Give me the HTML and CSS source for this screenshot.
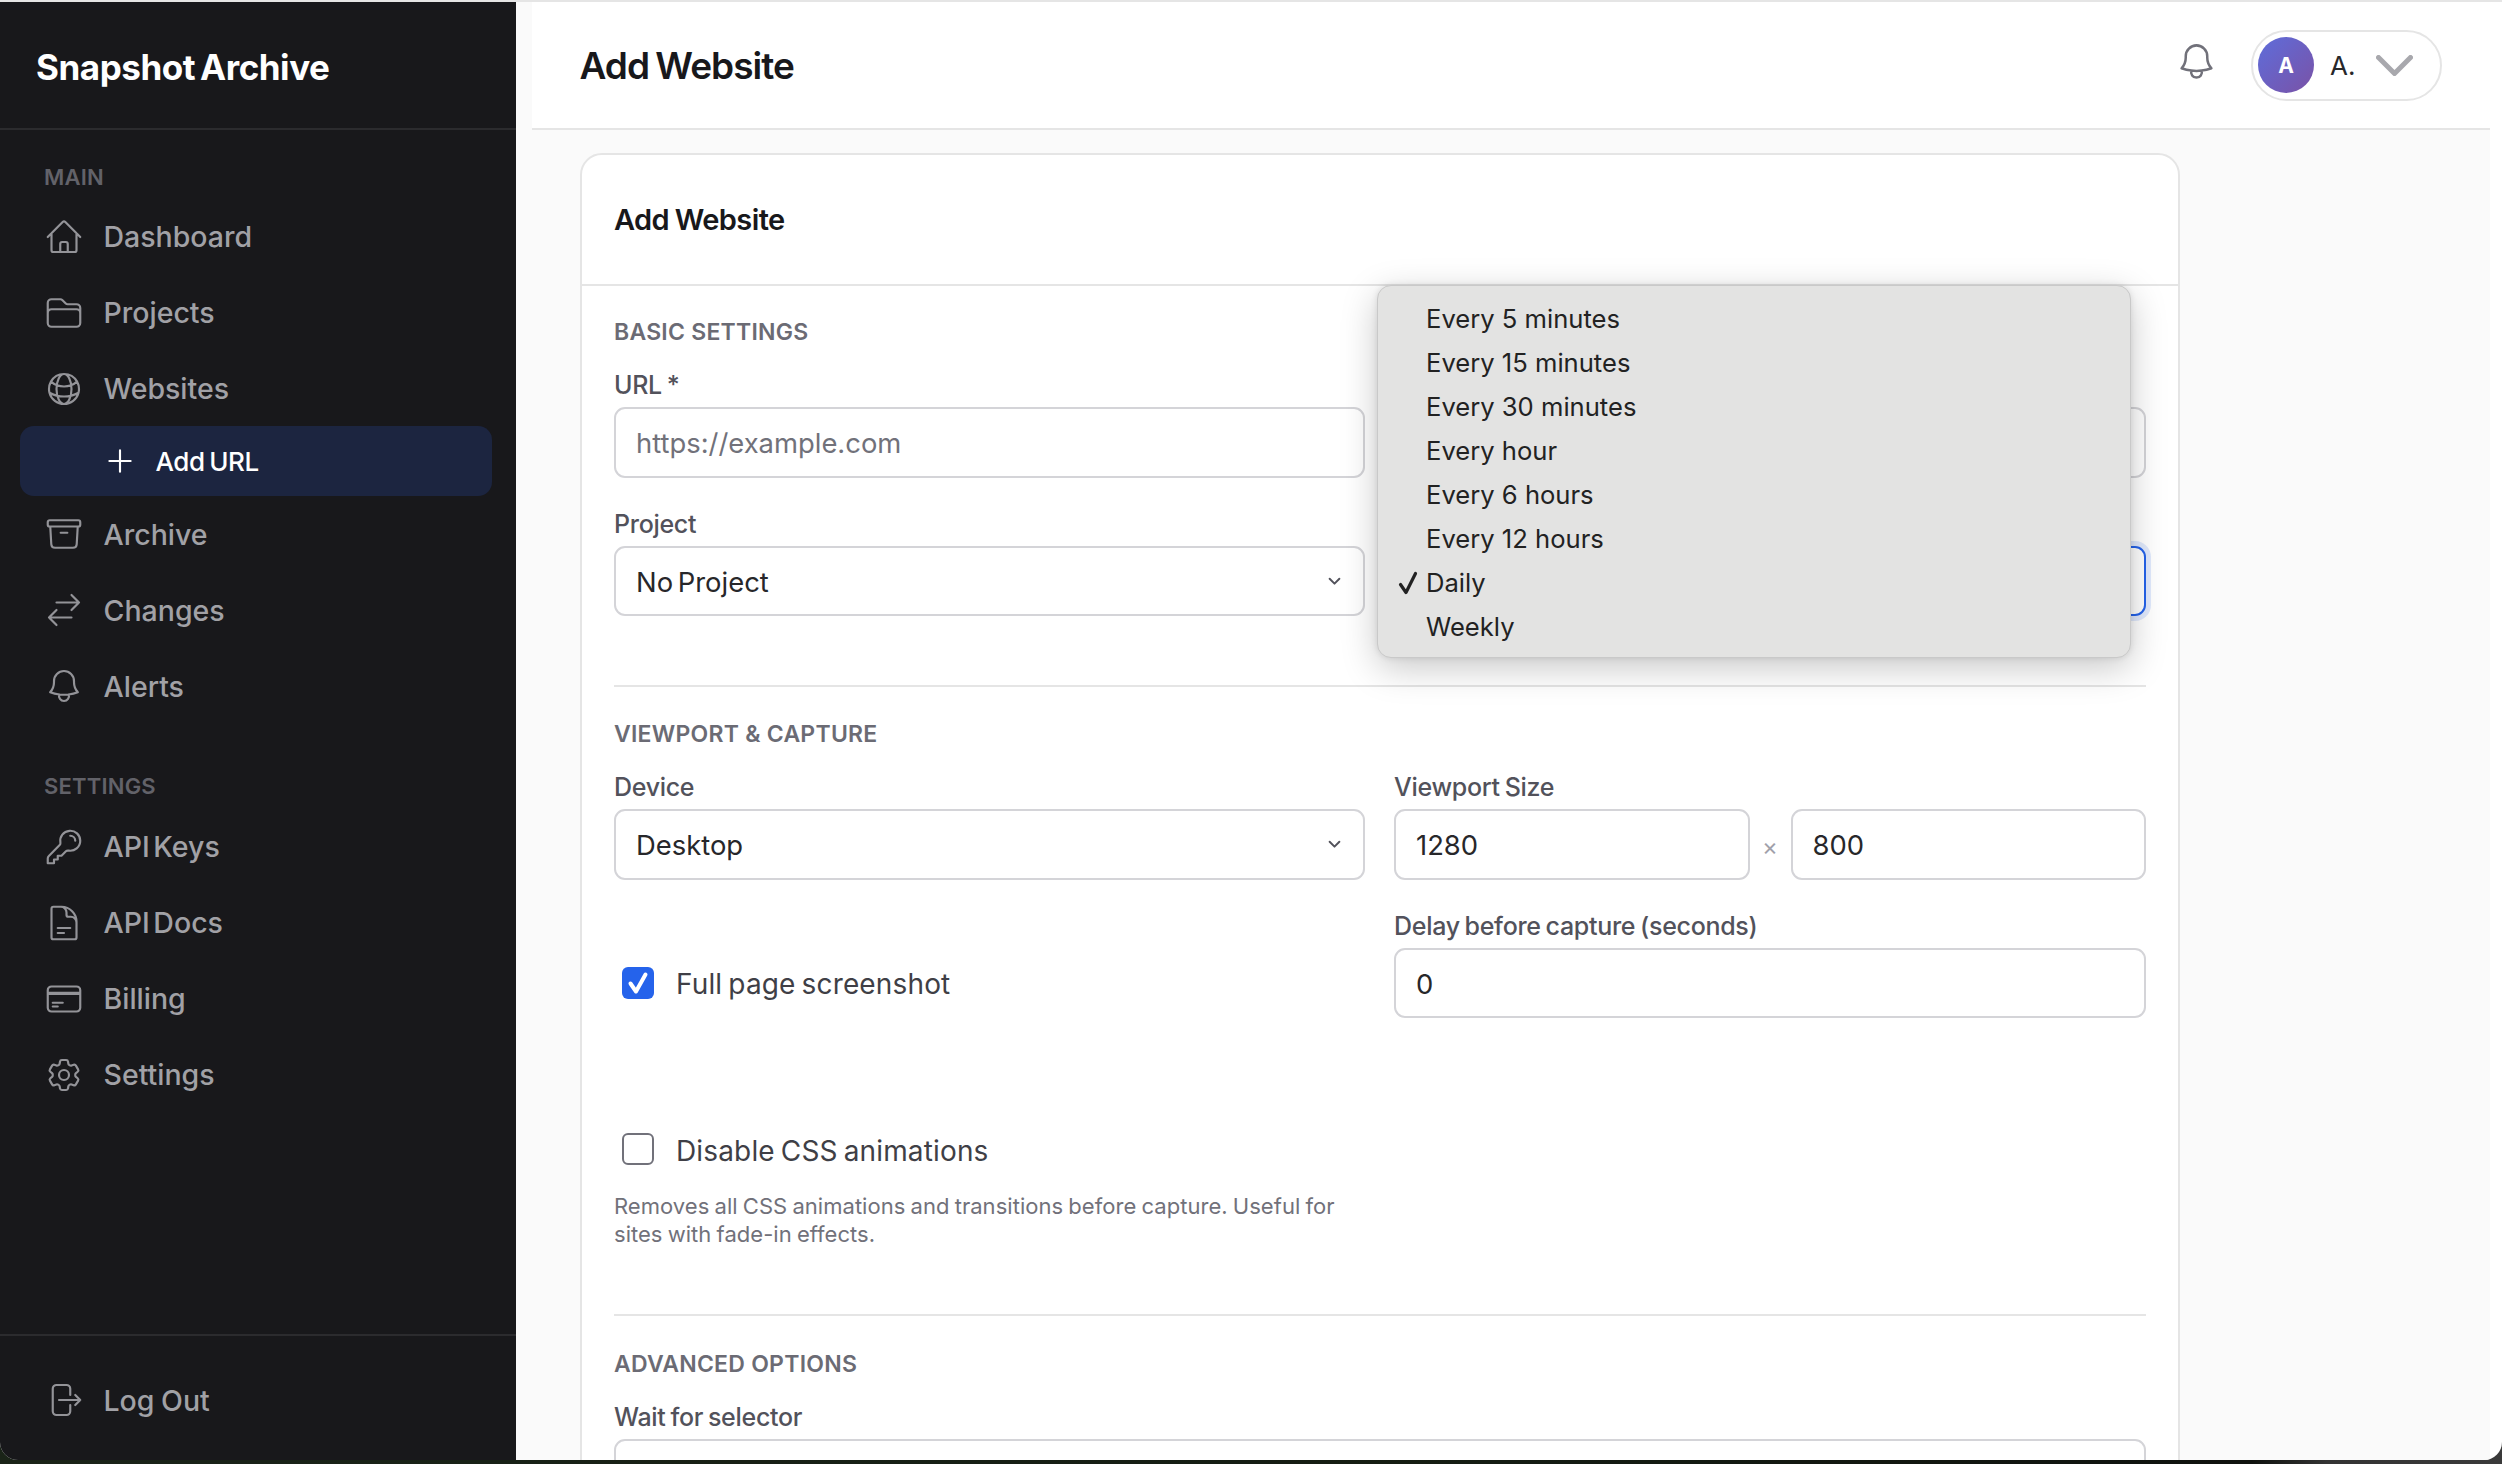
FILE: index.html
```html
<!DOCTYPE html>
<html lang="en">
<head>
<meta charset="utf-8">
<title>Add Website - Snapshot Archive</title>
<link rel="stylesheet" href="styles.css">
</head>
<body>
<div class="window">
  <aside class="sidebar">
    <div class="brand"><span class="brand-name">Snapshot Archive</span></div>
    <nav class="nav">
      <div class="nav-label first">MAIN</div>
      <a class="nav-item"><svg class="icon" viewBox="0 0 24 24"><path d="M2.25 12l8.954-8.955c.44-.439 1.152-.439 1.591 0L21.75 12M4.5 9.75v10.125c0 .621.504 1.125 1.125 1.125H9.75v-4.875c0-.621.504-1.125 1.125-1.125h2.25c.621 0 1.125.504 1.125 1.125V21h4.125c.621 0 1.125-.504 1.125-1.125V9.75M8.25 21h8.25"/></svg><span>Dashboard</span></a>
      <a class="nav-item"><svg class="icon" viewBox="0 0 24 24"><path d="M2.25 12.75V12A2.25 2.25 0 014.5 9.75h15A2.25 2.25 0 0121.75 12v.75m-8.69-6.44l-2.12-2.12a1.5 1.5 0 00-1.061-.44H4.5A2.25 2.25 0 002.25 6v12a2.25 2.25 0 002.25 2.25h15A2.25 2.25 0 0021.75 18V9a2.25 2.25 0 00-2.25-2.25h-5.379a1.5 1.5 0 01-1.06-.44z"/></svg><span>Projects</span></a>
      <a class="nav-item"><svg class="icon" viewBox="0 0 24 24"><path d="M12 21a9.004 9.004 0 008.716-6.747M12 21a9.004 9.004 0 01-8.716-6.747M12 21c2.485 0 4.5-4.03 4.5-9S14.485 3 12 3m0 18c-2.485 0-4.5-4.03-4.5-9S9.515 3 12 3m0 0a8.997 8.997 0 017.843 4.582M12 3a8.997 8.997 0 00-7.843 4.582m15.686 0A11.953 11.953 0 0112 10.5c-2.998 0-5.74-1.1-7.843-2.918m15.686 0A8.959 8.959 0 0121 12c0 .778-.099 1.533-.284 2.253m0 0A17.919 17.919 0 0112 16.5c-3.162 0-6.133-.815-8.716-2.247m0 0A9.015 9.015 0 013 12c0-1.605.42-3.113 1.157-4.418"/></svg><span>Websites</span></a>
      <a class="nav-sub"><svg class="icon-plus" viewBox="0 0 24 24"><path d="M12 4.5v15m7.5-7.5h-15"/></svg><span>Add URL</span></a>
      <a class="nav-item"><svg class="icon" viewBox="0 0 24 24"><path d="M20.25 7.5l-.625 10.632a2.25 2.25 0 01-2.247 2.118H6.622a2.25 2.25 0 01-2.247-2.118L3.75 7.5M10 11.25h4M3.375 7.5h17.25c.621 0 1.125-.504 1.125-1.125v-1.5c0-.621-.504-1.125-1.125-1.125H3.375c-.621 0-1.125.504-1.125 1.125v1.5c0 .621.504 1.125 1.125 1.125z"/></svg><span>Archive</span></a>
      <a class="nav-item"><svg class="icon" viewBox="0 0 24 24"><path d="M7.5 21L3 16.5m0 0L7.5 12M3 16.5h13.5m0-13.5L21 7.5m0 0L16.5 12M21 7.5H7.5"/></svg><span>Changes</span></a>
      <a class="nav-item"><svg class="icon" viewBox="0 0 24 24"><path d="M14.857 17.082a23.848 23.848 0 005.454-1.31A8.967 8.967 0 0118 9.75v-.7V9A6 6 0 006 9v.75a8.967 8.967 0 01-2.312 6.022c1.733.64 3.56 1.085 5.455 1.31m5.714 0a24.255 24.255 0 01-5.714 0m5.714 0a3 3 0 11-5.714 0"/></svg><span>Alerts</span></a>
      <div class="nav-label">SETTINGS</div>
      <a class="nav-item"><svg class="icon" viewBox="0 0 24 24"><path d="M15.75 5.25a3 3 0 013 3m3 0a6 6 0 01-7.029 5.912c-.563-.097-1.159.026-1.563.43L10.5 17.25H8.25v2.25H6v2.25H2.25v-2.818c0-.597.237-1.17.659-1.591l6.499-6.499c.404-.404.527-1 .43-1.563A6 6 0 1121.75 8.25z"/></svg><span>API Keys</span></a>
      <a class="nav-item"><svg class="icon" viewBox="0 0 24 24"><path d="M19.5 14.25v-2.625a3.375 3.375 0 00-3.375-3.375h-1.5A1.125 1.125 0 0113.5 7.125v-1.5a3.375 3.375 0 00-3.375-3.375H8.25m0 12.75h7.5m-7.5 3H12M10.5 2.25H5.625c-.621 0-1.125.504-1.125 1.125v17.25c0 .621.504 1.125 1.125 1.125h12.75c.621 0 1.125-.504 1.125-1.125V11.25a9 9 0 00-9-9z"/></svg><span>API Docs</span></a>
      <a class="nav-item"><svg class="icon" viewBox="0 0 24 24"><path d="M2.25 8.25h19.5M2.25 9h19.5m-16.5 5.25h6m-6 2.25h3m-3.75 3h15a2.25 2.25 0 002.25-2.25V6.75A2.25 2.25 0 0019.5 4.5h-15a2.25 2.25 0 00-2.25 2.25v10.5A2.25 2.25 0 004.5 19.5z"/></svg><span>Billing</span></a>
      <a class="nav-item"><svg class="icon" viewBox="0 0 24 24"><path d="M9.594 3.94c.09-.542.56-.94 1.11-.94h2.593c.55 0 1.02.398 1.11.94l.213 1.281c.063.374.313.686.645.87.074.04.147.083.22.127.324.196.72.257 1.075.124l1.217-.456a1.125 1.125 0 011.37.49l1.296 2.247a1.125 1.125 0 01-.26 1.431l-1.003.827c-.293.24-.438.613-.431.992a6.759 6.759 0 010 .255c-.007.378.138.75.43.99l1.005.828c.424.35.534.954.26 1.43l-1.298 2.247a1.125 1.125 0 01-1.369.491l-1.217-.456c-.355-.133-.75-.072-1.076.124a6.57 6.57 0 01-.22.128c-.331.183-.581.495-.644.869l-.213 1.28c-.09.543-.56.941-1.11.941h-2.594c-.55 0-1.02-.398-1.11-.94l-.213-1.281c-.062-.374-.312-.686-.644-.87a6.52 6.52 0 01-.22-.127c-.325-.196-.72-.257-1.076-.124l-1.217.456a1.125 1.125 0 01-1.369-.49l-1.297-2.247a1.125 1.125 0 01.26-1.431l1.004-.827c.292-.24.437-.613.43-.992a6.932 6.932 0 010-.255c.007-.378-.138-.75-.43-.99l-1.004-.828a1.125 1.125 0 01-.26-1.43l1.297-2.247a1.125 1.125 0 011.37-.491l1.216.456c.356.133.751.072 1.076-.124.072-.044.146-.087.22-.128.332-.183.582-.495.644-.869l.214-1.281z"/><path d="M15 12a3 3 0 11-6 0 3 3 0 016 0z"/></svg><span>Settings</span></a>
    </nav>
    <div class="logout">
      <a class="nav-item"><svg class="icon" viewBox="0 0 24 24"><path d="M15.75 9V5.25A2.25 2.25 0 0013.5 3h-6a2.25 2.25 0 00-2.25 2.25v13.5A2.25 2.25 0 007.5 21h6a2.25 2.25 0 002.25-2.25V15m3 0l3-3m0 0l-3-3m3 3H9"/></svg><span>Log Out</span></a>
    </div>
  </aside>

  <div class="main">
    <header class="topbar">
      <h1 class="page-title">Add Website</h1>
      <div class="top-actions">
        <svg class="top-bell" viewBox="0 0 24 24"><path d="M14.857 17.082a23.848 23.848 0 005.454-1.31A8.967 8.967 0 0118 9.75v-.7V9A6 6 0 006 9v.75a8.967 8.967 0 01-2.312 6.022c1.733.64 3.56 1.085 5.455 1.31m5.714 0a24.255 24.255 0 01-5.714 0m5.714 0a3 3 0 11-5.714 0"/></svg>
        <div class="user-pill">
          <span class="avatar">A</span>
          <span class="user-name">A.</span>
          <svg class="user-chevron" viewBox="0 0 37 21"><path d="M2.5 2.5l16 16 16-16"/></svg>
        </div>
      </div>
    </header>

    <section class="card">
      <div class="card-head"><h2 class="card-title">Add Website</h2></div>
      <div class="card-body">
        <div class="section">
          <h3 class="section-title">BASIC SETTINGS</h3>
          <div class="grid">
            <div class="field">
              <label class="label">URL *</label>
              <input class="control" type="text" placeholder="https://example.com">
            </div>
            <div class="field">
              <span class="label">&nbsp;</span>
              <input class="control" type="text">
            </div>
            <div class="field">
              <label class="label">Project</label>
              <div class="select-wrap">
                <div class="control select-value">No Project</div>
                <svg class="select-chevron" viewBox="0 0 12 8"><path d="M1.5 1.5L6 6l4.500-4.500"/></svg>
              </div>
            </div>
            <div class="field">
              <span class="label">&nbsp;</span>
              <div class="select-wrap">
                <div class="control select-value focused"></div>
              </div>
            </div>
          </div>
        </div>

        <div class="section">
          <h3 class="section-title">VIEWPORT &amp; CAPTURE</h3>
          <div class="grid">
            <div class="field">
              <label class="label">Device</label>
              <div class="select-wrap">
                <div class="control select-value">Desktop</div>
                <svg class="select-chevron" viewBox="0 0 12 8"><path d="M1.5 1.5L6 6l4.500-4.500"/></svg>
              </div>
            </div>
            <div class="field">
              <label class="label">Viewport Size</label>
              <div class="size-row">
                <input class="control" type="text" value="1280">
                <span class="times">×</span>
                <input class="control" type="text" value="800">
              </div>
            </div>
            <div class="field check-cell">
              <label class="check-row">
                <span class="box checked"><svg viewBox="0 0 32 32"><path d="M8.500 16.500l5.500 8L23.500 7.500"/></svg></span>
                <span class="check-text">Full page screenshot</span>
              </label>
            </div>
            <div class="field">
              <label class="label">Delay before capture (seconds)</label>
              <input class="control" type="text" value="0">
            </div>
            <div class="field anim-cell">
              <label class="check-row">
                <span class="box"></span>
                <span class="check-text">Disable CSS animations</span>
              </label>
              <p class="hint">Removes all CSS animations and transitions before capture. Useful for sites with fade-in effects.</p>
            </div>
          </div>
        </div>

        <div class="section">
          <h3 class="section-title">ADVANCED OPTIONS</h3>
          <div class="field">
            <label class="label">Wait for selector</label>
            <input class="control" type="text">
          </div>
        </div>
      </div>

      <div class="popup">
        <div class="option">Every 5 minutes</div>
        <div class="option">Every 15 minutes</div>
        <div class="option">Every 30 minutes</div>
        <div class="option">Every hour</div>
        <div class="option">Every 6 hours</div>
        <div class="option">Every 12 hours</div>
        <div class="option selected"><svg class="tick" viewBox="0 0 20 24"><path d="M2.500 13.500L8 21.500 17.500 2.500"/></svg>Daily</div>
        <div class="option">Weekly</div>
      </div>
    </section>
  </div>
</div>
</body>
</html>
```
FILE: styles.css
```css
* { box-sizing: border-box; }
html, body { margin: 0; height: 100%; }
body {
  width: 2502px;
  height: 1464px;
  overflow: hidden;
  background: linear-gradient(90deg, #1a2418 0%, #141c12 60%, #0f120e 90%, #333 93%, #3a3a3a 100%);
  font-family: "Inter", "Noto Sans", sans-serif;
}
.window {
  width: 2502px;
  height: 1460px;
  display: flex;
  background: #fff;
  border-top: 2px solid #e5e5e5;
  border-radius: 0 0 18px 18px;
  overflow: hidden;
}

/* Sidebar */
.sidebar {
  width: 516px;
  flex: none;
  background: #18181b;
  display: flex;
  flex-direction: column;
  margin-top: -2px;
  border-top: 2px solid #e5e5e5;
}
.brand {
  height: 128px;
  flex: none;
  border-bottom: 2px solid #2b2b2e;
  display: flex;
  align-items: center;
  padding: 3px 0 0 36px;
}
.brand-name { color: #fff; font-size: 35px; font-weight: 700; letter-spacing: -0.45px; word-spacing: -3px; }
.nav { flex: 1; padding: 0 24px 0 20px; display: flex; flex-direction: column; }
.nav-label {
  color: #626269;
  font-size: 22px;
  font-weight: 600;
  line-height: 28px;
  padding-left: 24px;
  letter-spacing: 0.2px;
  margin: 48px 0 8.500px;
}
.nav-label.first { margin-top: 32.500px; margin-bottom: 8px; }
.nav-item {
  display: flex;
  align-items: center;
  height: 76px;
  padding-left: 24px;
  color: #a1a1a6;
  font-size: 28.500px;
  font-weight: 500;
  gap: 19.500px;
  word-spacing: -4px;
}
.icon { width: 40px; height: 40px; flex: none; fill: none; stroke: #939398; stroke-width: 1.3; stroke-linecap: round; stroke-linejoin: round; }
.nav-sub {
  display: flex;
  align-items: center;
  height: 70px;
  margin-top: -0.500px;
  width: 472px;
  padding-left: 83px;
  gap: 18.500px;
  background: #1c2540;
  border-radius: 14px;
  color: #fff;
  font-size: 26px;
  font-weight: 500;
  letter-spacing: -0.4px;
  word-spacing: -2px;
}
.icon-plus { width: 34px; height: 34px; flex: none; fill: none; stroke: #fff; stroke-width: 1.5; stroke-linecap: round; }
.logout { height: 126px; flex: none; border-top: 2px solid #2b2b2e; padding: 26px 0 0 20px; }
.logout .nav-item { word-spacing: -1px; }

/* Main */
.main {
  width: 1974px;
  flex: none;
  background: #fafafa;
  padding-left: 16px;
  display: flex;
  flex-direction: column;
  overflow: hidden;
}
.topbar {
  height: 128px;
  flex: none;
  background: #fff;
  border-bottom: 2px solid #e5e5e5;
  display: flex;
  align-items: center;
  justify-content: space-between;
  padding: 0 48px 0 47.500px;
}
.page-title { margin: 0; font-size: 37px; font-weight: 600; color: #18181b; letter-spacing: -1px; word-spacing: -2px; }
.top-actions { display: flex; align-items: center; gap: 33px; }
.top-bell { width: 43px; height: 43px; margin-bottom: 8px; fill: none; stroke: #71717a; stroke-width: 1.4; stroke-linecap: round; stroke-linejoin: round; }
.user-pill {
  width: 191px;
  height: 71px;
  border: 2px solid #e5e5e5;
  border-radius: 36px;
  display: flex;
  align-items: center;
  padding-left: 5px;
}
.avatar {
  width: 56px;
  height: 56px;
  border-radius: 50%;
  background: linear-gradient(135deg, #5e6ddb, #7a52a6);
  color: #fff;
  font-size: 21px;
  font-weight: 700;
  display: flex;
  align-items: center;
  justify-content: center;
}
.user-name { margin-left: 16px; font-size: 26px; color: #27272a; }
.user-chevron { width: 37px; height: 21px; margin-left: 21px; fill: none; stroke: #a8a8ad; stroke-width: 5; stroke-linecap: round; stroke-linejoin: round; }

/* Card */
.card {
  position: relative;
  width: 1600px;
  margin: 23px 0 0 48px;
  background: #fff;
  border: 2px solid #e5e5e5;
  border-radius: 22px 22px 0 0;
  flex: none;
}
.card-head { height: 131px; border-bottom: 2px solid #e5e5e5; display: flex; align-items: center; padding-left: 32px; }
.card-title { margin: 0; font-size: 29px; font-weight: 600; color: #18181b; letter-spacing: -0.6px; word-spacing: -1px; }
.card-body { padding: 32px 32px 0; }
.section { border-bottom: 2px solid #e5e5e5; padding-bottom: 69px; margin-bottom: 33px; }
.section:nth-child(2) { padding-bottom: 66px; margin-bottom: 34px; }
.section:last-child { border-bottom: 0; }
.section-title {
  margin: 0 0 25px;
  font-size: 23px;
  line-height: 28px;
  font-weight: 600;
  color: #6b6b74;
  letter-spacing: 0.25px;
}
.grid { display: grid; grid-template-columns: 751px 752px; column-gap: 29px; row-gap: 32px; }
.field { display: flex; flex-direction: column; min-width: 0; }
.label {
  font-size: 25px;
  line-height: 28px;
  font-weight: 500;
  color: #52525b;
  margin-bottom: 8px;
  letter-spacing: -0.3px;
  word-spacing: -1.5px;
}
.control {
  width: 100%;
  height: 70.500px;
  border: 2px solid #d4d4d8;
  border-radius: 11px;
  background: #fff;
  padding: 2px 20px 0;
  font-family: inherit;
  font-size: 27.400px;
  word-spacing: -3px;
  color: #27272a;
  outline: none;
  display: flex;
  align-items: center;
}
.control::placeholder { color: #71717a; opacity: 1; }
.select-wrap { position: relative; }
.select-chevron {
  position: absolute;
  right: 24px;
  top: 31px;
  width: 13px;
  height: 9px;
  fill: none;
  stroke: #52525b;
  stroke-width: 1.800;
  stroke-linecap: round;
  stroke-linejoin: round;
}
.focused { border-color: #2563eb; box-shadow: 0 0 0 5px rgba(37, 99, 235, 0.14); }
.size-row { display: flex; align-items: center; }
.size-row .control { flex: 1; min-width: 0; }
.times { width: 41px; flex: none; text-align: center; color: #a1a1aa; font-size: 24px; padding-top: 4px; }
.check-cell { justify-content: flex-end; }
.check-row { height: 70.500px; display: flex; align-items: center; padding-left: 8px; gap: 22px; }
.box { width: 32px; height: 32px; flex: none; border: 2px solid #71717a; border-radius: 6px; background: #fff; }
.box.checked { border: 0; background: #2563eb; }
.box svg { display: block; fill: none; stroke: #fff; stroke-width: 4; stroke-linecap: round; stroke-linejoin: round; }
.check-text { font-size: 28px; color: #3f3f46; letter-spacing: 0.15px; word-spacing: -2px; padding-top: 3px; }
.anim-cell { padding-top: 64px; }
.hint { margin: 7px 0 0; font-size: 22px; line-height: 28px; color: #71717a; letter-spacing: 0.03px; word-spacing: -1px; }

/* Native select popup */
.popup {
  position: absolute;
  left: 795px;
  top: 130px;
  width: 754px;
  height: 373px;
  padding: 11px 0;
  background: #e3e3e2;
  border: 1px solid #c9c9c9;
  border-radius: 14px;
  box-shadow: 0 10px 36px rgba(0, 0, 0, 0.22), 0 0 6px rgba(0, 0, 0, 0.1);
}
.option {
  position: relative;
  height: 44px;
  line-height: 44px;
  padding-left: 48px;
  font-size: 25.600px;
  color: #222;
}
.tick { position: absolute; left: 20px; top: 10px; width: 20px; height: 24px; fill: none; stroke: #222; stroke-width: 3.200; stroke-linecap: round; stroke-linejoin: round; }
```
